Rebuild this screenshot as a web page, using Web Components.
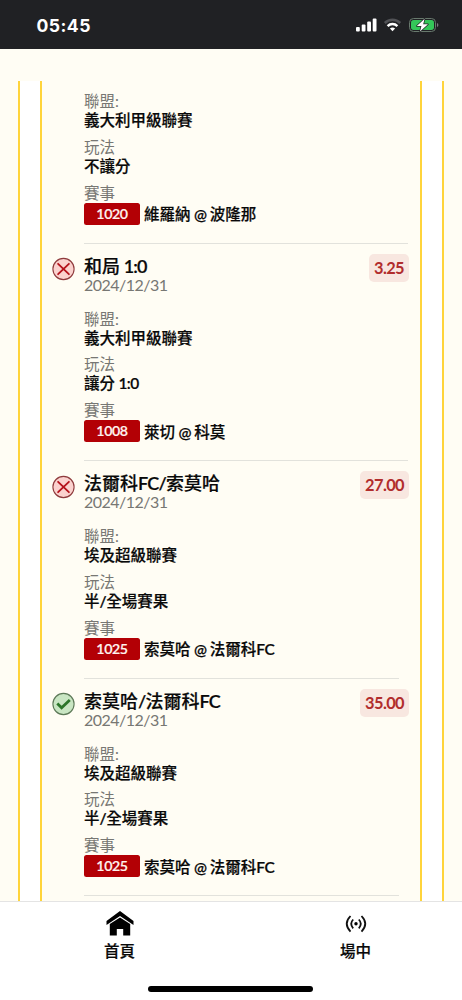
<!DOCTYPE html>
<html lang="zh-Hant">
<head>
<meta charset="utf-8">
<meta name="viewport" content="width=device-width, initial-scale=1">
<title>投注紀錄</title>
<style>
html,body{margin:0;height:100%;overflow:hidden}
body{font-family:Lato,"Noto Sans CJK TC",sans-serif;background:#fffdf4;color:#090909}
</style>
</head>
<body>
<bet-app></bet-app>
<script>
const define = (name, html, setup) => customElements.define(name, class extends HTMLElement {
  connectedCallback() {
    if (this.shadowRoot) return;
    const t = document.createElement('template');
    t.innerHTML = html;
    this.attachShadow({mode: 'open'}).append(t.content.cloneNode(true));
    if (setup) setup.call(this, this.shadowRoot);
  }
});

define('status-bar', `
<style>
:host{display:flex;box-sizing:border-box;height:49px;background:#202124;color:#fff;justify-content:space-between;align-items:center;padding:2px 23px 0 36.5px}
time{font:700 17.6px/20px Inter,sans-serif;letter-spacing:.45px}
svg{display:block}
</style>
<time>05:45</time>
<svg width="84" height="16" viewBox="0 0 84 16">
  <g fill="#fff" transform="translate(0 -1)"><rect x="1" y="10" width="3.8" height="4.5" rx="1"/><rect x="6.7" y="7.6" width="3.8" height="6.9" rx="1"/><rect x="12.2" y="4.6" width="3.8" height="9.9" rx="1"/><rect x="17.7" y="1.5" width="3.8" height="13" rx="1"/></g>
  <g transform="translate(0 -1)"><g fill="none" stroke-width="2.5"><path d="M29.8 6a11 11 0 0 1 15.4 0" stroke="#515256"/><path d="M32.6 9.1a7 7 0 0 1 9.8 0" stroke="#fff"/></g>
  <path d="M34.9 11.4q2.6-2 5.2 0L37.5 14.3z" fill="#fff"/></g>
  <g transform="translate(0 -1)"><rect x="54.5" y="1.5" width="26" height="13" rx="4" fill="none" stroke="#68796d"/>
  <rect x="56" y="3" width="23" height="10" rx="2.7" fill="#34c759"/>
  <path d="M82 6q1.4.6 1.4 2T82 10z" fill="#7c7d80"/>
  <path d="M69.6 1.8L61.8 9h4.6L65 14.4 73 7.2h-4.8z" fill="#fff" stroke="#202124" stroke-width="1.4" stroke-linejoin="round" paint-order="stroke"/></g>
</svg>`);

define('result-mark', `
<style>:host{display:block;width:24px;height:24px}svg{display:block}.win,:host([win]) .lose{display:none}:host([win]) .win{display:inline}</style>
<svg width="24" height="24" viewBox="0 0 24 24">
  <g class="lose"><circle cx="11.5" cy="12" r="10.6" fill="#fbd2ce" stroke="#8f3b3d" stroke-width="1.1"/><path d="M6.1 6.8l10.8 10.4M16.9 6.8L6.1 17.2" stroke="#b5121b" stroke-width="1.8" stroke-linecap="round"/></g>
  <g class="win"><circle cx="11.5" cy="12" r="10.6" fill="#c9e6c3" stroke="#5d7958" stroke-width="1.1"/><path d="M5.3 11.5l4.3 4.3 8.2-7.8" fill="none" stroke="#2c7629" stroke-width="2.8"/></g>
</svg>`);

define('bet-field', `
<style>
:host{display:block;height:45.8px;font-size:15.5px;font-weight:500}
dl,dt,dd{margin:0}
dt{height:18px;line-height:18px;font-weight:400;color:#777773}
dd{height:20px;line-height:20px;white-space:nowrap;display:flex;align-items:center;font-weight:inherit;-webkit-text-stroke:.2px}
</style>
<dl><dt></dt><dd><slot></slot></dd></dl>`, function (r) {
  r.querySelector('dt').textContent = this.getAttribute('label');
});

define('match-code', `
<style>:host{display:block;box-sizing:border-box;width:56px;height:22px;margin:4px 4px 0 0;border-radius:2.5px;background:#b30005;color:#fff3ef;text-align:center;font-size:14.2px;line-height:22.5px;font-weight:600;letter-spacing:-.4px;-webkit-text-stroke:.2px}</style>
<slot></slot>`);

define('odds-tag', `
<style>:host{display:block;box-sizing:border-box;height:28px;padding:0 5px;margin-right:.5px;border-radius:5px;background:#f8e7e0;color:#b12d2c;font-size:16.4px;line-height:28.5px;font-weight:700;letter-spacing:-.6px}</style>
<slot></slot>`);

define('bet-item', `
<style>
:host{display:grid;box-sizing:border-box;height:217.5px;grid-template-columns:32px 1fr;padding:0 10.5px 0 10.5px}
:host([continued]){height:162.5px}
result-mark{margin-top:13.5px}
:host([continued]) result-mark{display:none}
section{grid-column:2;box-sizing:border-box;border-bottom:1px solid #e2e2dc;margin-right:var(--rule-inset,2px)}
header{display:flex;justify-content:space-between;height:66px;box-sizing:border-box;padding-top:10px;margin-right:calc(-1 * var(--rule-inset,2px))}
:host([continued]) section{padding-top:11px}
h2{margin:1px 0 0;font-size:18px;line-height:22px;font-weight:500;white-space:nowrap;-webkit-text-stroke:.2px}
p{margin:0;font-size:16px;line-height:15px;color:#777773;letter-spacing:-.52px}
match-code{flex:none}
.teams{padding-top:5px}
b{font-weight:600;letter-spacing:-.5px}
h2 b{letter-spacing:-.8px}
</style>
<result-mark></result-mark>
<section>
  <header><div><h2></h2><p>2024/12/31</p></div><odds-tag></odds-tag></header>
  <bet-field label="聯盟:"><span class="league"></span></bet-field>
  <bet-field label="玩法"><span class="play"></span></bet-field>
  <bet-field label="賽事"><match-code></match-code><span class="teams"></span></bet-field>
</section>`, function (r) {
  // Latin runs are set tighter and one step heavier than the Chinese text
  const put = (s, a) => {
    const el = r.querySelector(s);
    for (const run of (this.getAttribute(a) || '').split(/([\x20-\x7e]+)/)) {
      if (!run) continue;
      if (/^[\x20-\x7e]/.test(run) && s !== 'odds-tag' && s !== 'match-code') {
        const b = document.createElement('b');
        b.textContent = run;
        el.append(b);
      } else el.append(run);
    }
  };
  put('h2', 'pick'); put('odds-tag', 'odds'); put('.league', 'league'); put('.play', 'play'); put('match-code', 'code'); put('.teams', 'teams');
  if (this.hasAttribute('continued')) r.querySelector('header').remove();
  if (this.hasAttribute('win')) r.querySelector('result-mark').setAttribute('win', '');
});

define('bet-list', `
<style>
:host{display:block;box-sizing:border-box;margin:32px 18px 0 17.5px;flex:1;min-height:0;border:solid #ffd43b;border-width:0 2px;background:#fff;padding:0 20px;overflow:hidden}
div{height:100%;box-sizing:border-box;border:solid #ffd43b;border-width:0 2px;background:#fffdf4;overflow:hidden}
</style>
<div><slot></slot></div>`);

define('tab-item', `
<style>:host{flex:1;display:flex;flex-direction:column;align-items:center;font-size:15.5px;font-weight:500;line-height:20px;-webkit-text-stroke:.2px}
.icon{height:29px;margin-bottom:1.5px}</style>
<div class="icon"><slot name="icon"></slot></div><slot></slot>`);

define('tab-bar', `
<style>
:host{display:flex;flex-direction:column;box-sizing:border-box;height:99px;background:#fff;border-top:1px solid #e4e4e4;align-items:center}
nav{display:flex;width:472px;flex:none;height:84px;padding-top:8px;box-sizing:border-box;margin-right:-13px}
i{display:block;width:165px;height:5.5px;border-radius:3px;background:#000;margin-right:1px}
svg{display:block}
</style>
<nav>
<tab-item><svg slot="icon" width="28" height="26" viewBox="0 0 28 26"><path d="M.5 11L14 1l13.5 10v4L14 6 .5 15z"/><path d="M3.8 14L14 7.5 24.2 14v11.5h-7V19h-6.4v6.5h-7z"/></svg>首頁</tab-item>
<tab-item><svg slot="icon" width="24" height="26" viewBox="0 0 24 26"><g fill="none" stroke="#111" stroke-width="1.8"><path d="M6.5 6Q-1 13.8 6.5 21.7M17.5 6Q25 13.8 17.5 21.7M9.2 9.5Q5.2 13.8 9.2 18.3M14.8 9.5Q18.8 13.8 14.8 18.3"/></g><circle cx="12" cy="13.8" r="1.7"/></svg>場中</tab-item>
</nav><i></i>`);

define('bet-app', `
<style>:host{display:flex;flex-direction:column;height:1000px}tab-bar,status-bar{flex:none}.short{--rule-inset:11px}</style>
<status-bar></status-bar>
<bet-list>
<bet-item continued league="義大利甲級聯賽" play="不讓分" code="1020" teams="維羅納 @ 波隆那"></bet-item>
<bet-item pick="和局 1:0" odds="3.25" league="義大利甲級聯賽" play="讓分 1:0" code="1008" teams="萊切 @ 科莫"></bet-item>
<bet-item class="short" pick="法爾科FC/索莫哈" odds="27.00" league="埃及超級聯賽" play="半/全場賽果" code="1025" teams="索莫哈 @ 法爾科FC"></bet-item>
<bet-item class="short" win pick="索莫哈/法爾科FC" odds="35.00" league="埃及超級聯賽" play="半/全場賽果" code="1025" teams="索莫哈 @ 法爾科FC"></bet-item>
</bet-list>
<tab-bar></tab-bar>`);
</script>
</body>
</html>
